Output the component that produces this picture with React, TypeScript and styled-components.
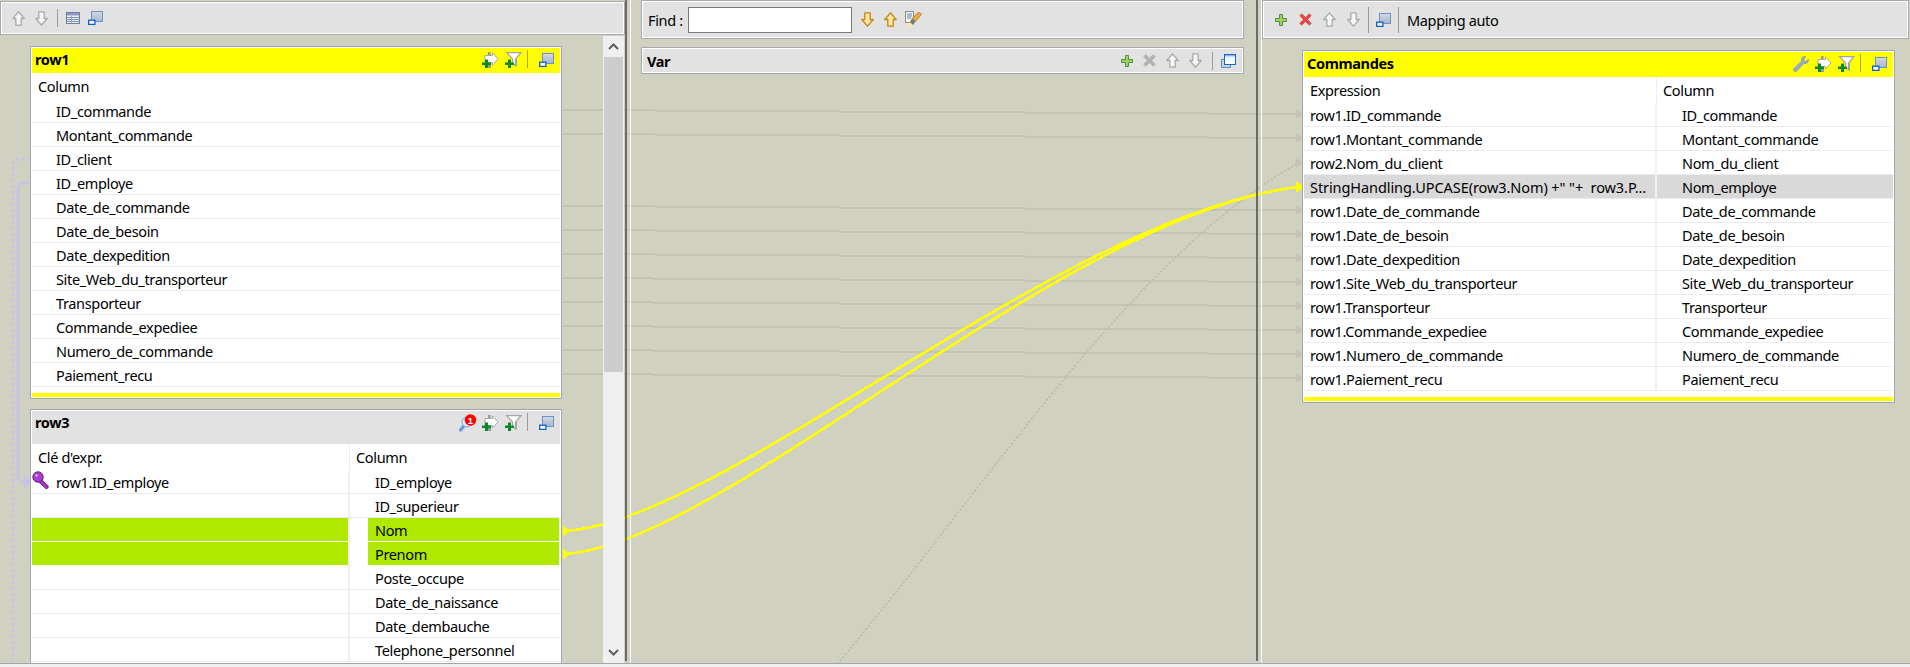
import React from "react";
import styled, { createGlobalStyle } from "styled-components";

const Global = createGlobalStyle`
  html, body { margin: 0; padding: 0; background: #d1d1c2; overflow: hidden; }
  #root { width: 1910px; height: 667px; }
  * { box-sizing: border-box; }
`;

const BG = "#d1d1c2";
const FONT = `"Noto Sans", "Open Sans", sans-serif`;

const Page = styled.div`
  position: relative;
  width: 1910px;
  height: 667px;
  overflow: hidden;
  background: ${BG};
  font-family: ${FONT};
  font-size: 14.5px;
  letter-spacing: -0.35px;
  color: #000;
  display: flex;
  flex-direction: column;
`;
const Main = styled.div`
  position: relative;
  z-index: 1;
  flex: 1;
  min-height: 0;
  display: flex;
`;
const StatusStrip = styled.div`
  position: relative;
  z-index: 1;
  height: 4px;
  background: #f0f0f0;
  border-top: 1px solid #a6a6a6;
`;
const Wires = styled.svg`
  position: absolute;
  left: 0;
  top: 0;
  z-index: 0;
`;
const LeftPane = styled.div`
  width: 625px;
  display: flex;
  flex-direction: column;
  min-height: 0;
`;
const Toolbar = styled.div<{ $h?: number; $mt?: number }>`
  height: ${(p) => p.$h ?? 35}px;
  margin-top: ${(p) => p.$mt ?? 0}px;
  flex: none;
  display: flex;
  align-items: center;
  background: #e2e2e2;
  border: 1px solid #a9a9ad;
  box-shadow: inset 0 0 0 1px #fff;
  padding-left: 6px;
`;
const LeftBody = styled.div`
  flex: 1;
  min-height: 0;
  display: flex;
`;
const CardColumn = styled.div`
  width: 603px;
  padding: 11px 41px 0 30px;
  display: flex;
  flex-direction: column;
  gap: 10px;
  overflow: hidden;
`;
const ScrollBar = styled.div`
  width: 21px;
  margin-top: 1px;
  background: #f0f0f0;
  display: flex;
  flex-direction: column;
  align-items: center;
  justify-content: space-between;
  position: relative;
`;
const ScrollThumb = styled.div`
  position: absolute;
  left: 1px;
  right: 1px;
  top: 21px;
  height: 315px;
  background: #cdcdcd;
`;
const ScrollArrow = styled.div`
  height: 21px;
  width: 100%;
  display: flex;
  align-items: center;
  justify-content: center;
`;
const Sash = styled.div`
  flex: none;
  width: 2px;
  margin-bottom: 2px;
  background: #6b6b6b;
`;
const CenterPane = styled.div`
  width: 626px;
  margin-left: 3px;
  border-left: 1px solid #fff;
  padding: 0 12px 0 10px;
  display: flex;
  flex-direction: column;
`;
const RightPane = styled.div`
  flex: 1;
  margin-left: 3px;
  border-left: 1px solid #fff;
  padding: 0 1px 0 0;
  display: flex;
  flex-direction: column;
`;
const RightCardWrap = styled.div`
  padding: 11px 14px 0 40px;
`;
const Card = styled.div`
  background: #fff;
  border: 1px solid #a3a7aa;
  padding: 1px;
  flex: none;
`;
const ClippedCard = styled(Card)`
  flex: 1;
  min-height: 300px;
`;
const CardHead = styled.div<{ $tone: "yellow" | "grey"; $h: number }>`
  height: ${(p) => p.$h}px;
  background: ${(p) => (p.$tone === "yellow" ? "#ffff00" : "#e2e2e2")};
  display: flex;
  align-items: flex-start;
  padding: 2px 2px 0 3px;
`;
const CardTitle = styled.div`
  font-weight: 700;
  line-height: 18px;
  flex: 1;
`;
const VarCard = styled.div`
  height: 27px;
  margin-top: 8px;
  background: #e2e2e2;
  border: 1px solid #a9a9ad;
  box-shadow: inset 0 0 0 1px #fff;
  display: flex;
  align-items: center;
  padding: 0 3px 0 5px;
`;
const Btn = styled.span<{ $w?: number }>`
  width: ${(p) => p.$w ?? 23}px;
  height: 19px;
  flex: none;
  display: flex;
  align-items: center;
  justify-content: center;
`;
const Sep = styled.span<{ $w?: number; $h?: number; $c?: string }>`
  flex: none;
  width: ${(p) => p.$w ?? 10}px;
  height: ${(p) => p.$h ?? 18}px;
  display: flex;
  justify-content: center;
  &::before {
    content: "";
    width: 1px;
    height: 100%;
    background: ${(p) => p.$c ?? "#9c9c9c"};
  }
`;
const HeadSep = styled(Sep)`
  justify-content: flex-start;
  padding-left: 2px;
`;
const ToolText = styled.span`
  margin-left: 6px;
`;
const FindLabel = styled.span`
  width: 40px;
`;
const FindInput = styled.div`
  width: 164px;
  height: 26px;
  background: #fff;
  border: 1px solid #7a7a7a;
  margin-right: 4px;
`;
const Columns = styled.div<{ $cols: string }>`
  display: grid;
  grid-template-columns: ${(p) => p.$cols};
`;
const HeadCell = styled.div<{ $divider?: boolean }>`
  height: 26px;
  line-height: 26px;
  padding-left: 6px;
  border-right: ${(p) => (p.$divider ? "1px solid #eceef2" : "none")};
`;
const Cell = styled.div<{
  $indent?: number;
  $green?: boolean;
  $selected?: boolean;
  $divider?: boolean;
  $tree?: boolean;
  $loose?: boolean;
}>`
  height: 24px;
  line-height: 25px;
  white-space: pre;
  overflow: hidden;
  position: relative;
  letter-spacing: ${(p) => (p.$loose ? "-0.08px" : "inherit")};
  padding-left: ${(p) => p.$indent ?? 6}px;
  border-bottom: 1px solid ${(p) => (p.$green ? "#fff" : "#e9ebf0")};
  border-right: ${(p) => (p.$divider ? `2px solid #eff0f5` : "none")};
  background: ${(p) =>
    p.$selected
      ? "#d9d9d9"
      : p.$green && !p.$tree
      ? "#afe800"
      : "transparent"};
`;
const GreenFill = styled.span`
  display: block;
  margin: 0 1px 0 -7px;
  padding-left: 7px;
  height: 23px;
  background: #afe800;
`;
const CardFoot = styled.div`
  height: 10px;
  padding-top: 6px;
  &::after {
    content: "";
    display: block;
    height: 4px;
    background: #ffff00;
  }
`;
const KeyIcon = styled.span`
  position: absolute;
  left: 0;
  top: 1px;
  display: block;
  line-height: 0;
`;

/* icons */
const Arrow = ({ dir, tone }: { dir: "up" | "down"; tone: "grey" | "gold" }) => {
  const stroke = tone === "grey" ? "#a9a9a9" : "#c4860e";
  const fill = tone === "grey" ? "#f6f6f6" : "#ffe8a6";
  return (
    <svg width="13" height="15" viewBox="0 0 13 15">
      <g transform={dir === "down" ? "rotate(180 6.5 7.5)" : undefined}>
        <path d="M6.5 .8 L12.2 7.5 H9.2 V14.2 H3.8 V7.5 H.8 Z" fill={fill} stroke={stroke} strokeWidth="1.3" strokeLinejoin="round" />
      </g>
    </svg>
  );
};
const WindowIcon = ({ bright }: { bright?: boolean }) => (
  <svg width="15" height="14" viewBox="0 0 15 14">
    <defs>
      <linearGradient id={bright ? "wb" : "wd"} x1="0" y1="0" x2="0" y2="1">
        <stop offset="0" stopColor={bright ? "#4e8ce8" : "#d6deea"} />
        <stop offset=".25" stopColor={bright ? "#e8f2ff" : "#c6d0de"} />
        <stop offset="1" stopColor={bright ? "#ffffff" : "#a8b8cc"} />
      </linearGradient>
    </defs>
    {bright && <rect x=".5" y="5.5" width="9" height="8" fill="#c6d4e6" stroke="#6a8ab8" />}
    <rect x="3.5" y=".5" width="11" height="10" fill={`url(#${bright ? "wb" : "wd"})`} stroke={bright ? "#1467d8" : "#6f93c4"} />
    {!bright && <rect x=".7" y="9.2" width="6.2" height="4.2" fill="#fff" stroke="#0b5ed7" strokeWidth="1.3" />}
  </svg>
);
const TableIcon = () => (
  <svg width="14" height="12" viewBox="0 0 14 12">
    <rect x=".5" y=".5" width="13" height="11" fill="#eef2f8" stroke="#6d80a6" />
    <rect x="1" y="1" width="12" height="2.5" fill="#8b9cbf" />
    <path d="M1 5.5H13M1 7.5H13M1 9.5H13" stroke="#7f90b2" />
    <path d="M5.5 3.5V11" stroke="#9aa8c4" />
  </svg>
);
const GreenPlusOverlay = () => <path d="M3 7.5H6V10.5H9V13H6V16H3V13H0V10.5H3Z" fill="#0a8a2c" />;
const AddArrowIcon = () => (
  <svg width="17" height="16" viewBox="0 0 17 16">
    <rect x="6" y="0" width="2.5" height="4" fill="#9a9a9a" />
    <path d="M3 3.5H10.5V.9L16 7 10.5 13.1V10.5H3Z" fill="#fff" stroke="#a8a8a8" />
    <rect x="6" y="10" width="3" height="6" fill="#9a9a9a" />
    <GreenPlusOverlay />
  </svg>
);
const FilterAddIcon = () => (
  <svg width="17" height="16" viewBox="0 0 17 16">
    <path d="M1.7 .7H15.8L10.6 7V13.5L7.6 12V7Z" fill="#fff" stroke="#a4a4a4" strokeWidth="1.2" />
    <rect x="9.8" y="7" width="2.2" height="7.5" fill="#a4a4a4" />
    <GreenPlusOverlay />
  </svg>
);
const PlusIcon = () => (
  <svg width="12" height="12" viewBox="0 0 12 12">
    <path d="M4.5.5H7.5V4.5H11.5V7.5H7.5V11.5H4.5V7.5H.5V4.5H4.5Z" fill="#a3cf5d" stroke="#4d8f4a" />
  </svg>
);
const CrossIcon = ({ color, edge }: { color: string; edge: string }) => (
  <svg width="13" height="13" viewBox="0 0 13 13">
    <path d="M2.7.8 6.5 4.4 10.3.8 12.2 2.7 8.5 6.5 12.2 10.3 10.3 12.2 6.5 8.6 2.7 12.2.8 10.3 4.5 6.5.8 2.7Z" fill={color} stroke={edge} strokeWidth=".7" />
  </svg>
);
const WrenchIcon = () => (
  <svg width="16" height="16" viewBox="0 0 16 16">
    <path d="M15.5 3.5 12.8 5.6 10.8 4.8 10.8 2.4 13 .6C10.6-.2 8.4 1.4 8.4 3.8L8.6 5.2 1.3 12.2C.4 13.2.6 14.4 1.4 15 2.2 15.8 3.3 15.6 4 14.8L10.6 7.6C13 8.2 15.8 6.6 15.5 3.5Z" fill="#8eacd6" stroke="#7d8fa8" strokeWidth=".7" />
  </svg>
);
const LookupIcon = () => (
  <svg width="18" height="18" viewBox="0 0 18 18">
    <path d="M1.5 16 6.5 10" stroke="#6f9bd8" strokeWidth="3.4" strokeLinecap="round" />
    <circle cx="8" cy="8" r="5" fill="#dbe6f6" stroke="#8aa8d0" />
    <circle cx="11.5" cy="6" r="5.8" fill="#f00" />
    <text x="11.5" y="9.5" textAnchor="middle" fontSize="9.5" fontWeight="700" letterSpacing="0" fill="#fff" fontFamily="Liberation Sans, sans-serif">1</text>
  </svg>
);
const SearchEditIcon = () => (
  <svg width="17" height="17" viewBox="0 0 17 17">
    <rect x=".5" y=".5" width="8" height="11" fill="#f4f4ec" stroke="#8a8f80" />
    <path d="M2 3H7M2 5H7M2 7H6" stroke="#5f86c0" />
    <path d="M1 16.5 5 11 8 14Z" fill="#ffe9a0" />
    <path d="M7 7.5 12 2.5C13.5 1 16.5 1.5 16 4L10.5 10.5Z" fill="#e8a94a" stroke="#a97a2a" strokeWidth=".8" />
    <path d="M5 11 7 7.5 10.5 10.5 8 14Z" fill="#777" />
  </svg>
);
const PurpleKey = () => (
  <svg width="17" height="19" viewBox="0 0 17 19">
    <path d="M6.5 8 14.4 15.8" stroke="#6a1f86" strokeWidth="4.4" strokeLinecap="round" />
    <path d="M6.5 8 14.4 15.8" stroke="#a93ecb" strokeWidth="2.4" strokeLinecap="round" />
    <circle cx="6" cy="6" r="5.2" fill="#a93ecb" stroke="#6a1f86" />
    <circle cx="4.5" cy="4.5" r="1.2" fill="#e6b5f5" />
  </svg>
);
const Chevron = ({ up }: { up?: boolean }) => (
  <svg width="11" height="7" viewBox="0 0 11 7">
    <path d={up ? "M1 6 5.5 1.5 10 6" : "M1 1 5.5 5.5 10 1"} fill="none" stroke="#5f5f5f" strokeWidth="2" />
  </svg>
);

const row1Cols = [
  "ID_commande", "Montant_commande", "ID_client", "ID_employe", "Date_de_commande", "Date_de_besoin",
  "Date_dexpedition", "Site_Web_du_transporteur", "Transporteur", "Commande_expediee", "Numero_de_commande", "Paiement_recu",
];
const row3Cols = [
  "ID_employe", "ID_superieur", "Nom", "Prenom", "Poste_occupe", "Date_de_naissance", "Date_dembauche", "Telephone_personnel",
];
const outRows: [string, string][] = [
  ["row1.ID_commande", "ID_commande"],
  ["row1.Montant_commande", "Montant_commande"],
  ["row2.Nom_du_client", "Nom_du_client"],
  ['StringHandling.UPCASE(row3.Nom) +" "+  row3.P...', "Nom_employe"],
  ["row1.Date_de_commande", "Date_de_commande"],
  ["row1.Date_de_besoin", "Date_de_besoin"],
  ["row1.Date_dexpedition", "Date_dexpedition"],
  ["row1.Site_Web_du_transporteur", "Site_Web_du_transporteur"],
  ["row1.Transporteur", "Transporteur"],
  ["row1.Commande_expediee", "Commande_expediee"],
  ["row1.Numero_de_commande", "Numero_de_commande"],
  ["row1.Paiement_recu", "Paiement_recu"],
];

const mapped = [0, 1, 4, 5, 6, 7, 8, 9, 10, 11];
const WIRE = "#c3c4b3";
const LILAC = "#c9c3e6";

const Connectors = () => (
  <Wires width="1910" height="667" viewBox="0 0 1910 667">
    {mapped.map((i) => (
      <g key={i}>
        <path d={`M562 ${110 + 24 * i}L1298 ${114 + 24 * i}`} stroke={WIRE} strokeWidth="2" shapeRendering="crispEdges" />
        <path d={`M1296 ${109 + 24 * i}L1303 ${114 + 24 * i}L1296 ${119 + 24 * i}Z`} fill={WIRE} />
      </g>
    ))}
    <path d="M835 667C1000 470 1130 260 1298 163" fill="none" stroke="#b9bcab" strokeWidth="1.6" strokeDasharray="2 2" />
    <path d="M1296 158L1303 163L1296 168Z" fill={WIRE} />
    <path d="M563 531C720 525 1060 215 1298 187" fill="none" stroke="#ffff00" strokeWidth="2.6" shapeRendering="crispEdges" />
    <path d="M563 554C720 548 1060 215 1298 187" fill="none" stroke="#ffff00" strokeWidth="2.6" shapeRendering="crispEdges" />
    <path d="M1296 181L1304 187L1296 193Z" fill="#ffff00" />
    <path d="M563 525L569 531L563 537Z" fill="#ffff00" />
    <path d="M563 548L569 554L563 560Z" fill="#ffff00" />
    <path d="M31 183H24Q18 183 18 189V476Q18 482 24 482H31" fill="none" stroke={LILAC} strokeWidth="3" />
    <path d="M24 474L32 482L24 490Z" fill={LILAC} />
    <path d="M31 159H18Q13 159 13 164V667" fill="none" stroke={LILAC} strokeWidth="3" strokeDasharray="3 3" />
  </Wires>
);

export default function App() {
  return (
    <Page>
      <Global />
      <Connectors />
      <Main>
        <LeftPane>
          <Toolbar $h={34} $mt={1}>
            <Btn><Arrow dir="up" tone="grey" /></Btn>
            <Btn><Arrow dir="down" tone="grey" /></Btn>
            <Sep $w={8} />
            <Btn><TableIcon /></Btn>
            <Btn><WindowIcon /></Btn>
          </Toolbar>
          <LeftBody>
            <CardColumn>
              <Card>
                <CardHead $tone="yellow" $h={25}>
                  <CardTitle>row1</CardTitle>
                  <Btn><AddArrowIcon /></Btn>
                  <Btn><FilterAddIcon /></Btn>
                  <HeadSep $c="#b0a800" />
                  <Btn><WindowIcon /></Btn>
                </CardHead>
                <Columns $cols="1fr">
                  <HeadCell>Column</HeadCell>
                  {row1Cols.map((c) => (
                    <Cell key={c} $indent={24}>{c}</Cell>
                  ))}
                </Columns>
                <CardFoot />
              </Card>
              <ClippedCard>
                <CardHead $tone="grey" $h={33}>
                  <CardTitle>row3</CardTitle>
                  <Btn><LookupIcon /></Btn>
                  <Btn><AddArrowIcon /></Btn>
                  <Btn><FilterAddIcon /></Btn>
                  <HeadSep />
                  <Btn><WindowIcon /></Btn>
                </CardHead>
                <Columns $cols="318px 1fr">
                  <HeadCell $divider>Clé d'expr.</HeadCell>
                  <HeadCell>Column</HeadCell>
                  {row3Cols.map((c, i) => {
                    const green = c === "Nom" || c === "Prenom";
                    return (
                      <React.Fragment key={c}>
                        <Cell $divider $indent={24} $green={green}>
                          {i === 0 && <KeyIcon><PurpleKey /></KeyIcon>}
                          {i === 0 ? "row1.ID_employe" : ""}
                        </Cell>
                        <Cell $indent={25} $green={green} $tree>
                          {green ? <GreenFill>{c}</GreenFill> : c}
                        </Cell>
                      </React.Fragment>
                    );
                  })}
                </Columns>
              </ClippedCard>
            </CardColumn>
            <ScrollBar>
              <ScrollThumb />
              <ScrollArrow><Chevron up /></ScrollArrow>
              <ScrollArrow><Chevron /></ScrollArrow>
            </ScrollBar>
          </LeftBody>
        </LeftPane>
        <Sash />
        <CenterPane>
          <Toolbar $h={39}>
            <FindLabel>Find :</FindLabel>
            <FindInput />
            <Btn><Arrow dir="down" tone="gold" /></Btn>
            <Btn><Arrow dir="up" tone="gold" /></Btn>
            <Btn><SearchEditIcon /></Btn>
          </Toolbar>
          <VarCard>
            <CardTitle>Var</CardTitle>
            <Btn><PlusIcon /></Btn>
            <Btn><CrossIcon color="#b4b4b4" edge="#a4a4a4" /></Btn>
            <Btn><Arrow dir="up" tone="grey" /></Btn>
            <Btn><Arrow dir="down" tone="grey" /></Btn>
            <Sep $w={10} />
            <Btn><WindowIcon bright /></Btn>
          </VarCard>
        </CenterPane>
        <Sash />
        <RightPane>
          <Toolbar $h={39}>
            <Btn $w={24}><PlusIcon /></Btn>
            <Btn $w={24}><CrossIcon color="#ee4444" edge="#c84a4a" /></Btn>
            <Btn $w={24}><Arrow dir="up" tone="grey" /></Btn>
            <Btn $w={24}><Arrow dir="down" tone="grey" /></Btn>
            <Sep $w={6} $h={26} />
            <Btn $w={24}><WindowIcon /></Btn>
            <Sep $w={6} $h={26} />
            <ToolText>Mapping auto</ToolText>
          </Toolbar>
          <RightCardWrap>
            <Card>
              <CardHead $tone="yellow" $h={25}>
                <CardTitle>Commandes</CardTitle>
                <Btn><WrenchIcon /></Btn>
                <Btn><AddArrowIcon /></Btn>
                <Btn><FilterAddIcon /></Btn>
                <HeadSep $c="#b0a800" />
                <Btn><WindowIcon /></Btn>
              </CardHead>
              <Columns $cols="353px 1fr">
                <HeadCell $divider>Expression</HeadCell>
                <HeadCell>Column</HeadCell>
                {outRows.map(([e, c], i) => (
                  <React.Fragment key={c}>
                    <Cell $divider $selected={i === 3} $loose={i === 3}>{e}</Cell>
                    <Cell $indent={25} $selected={i === 3}>{c}</Cell>
                  </React.Fragment>
                ))}
              </Columns>
              <CardFoot />
            </Card>
          </RightCardWrap>
        </RightPane>
      </Main>
      <StatusStrip />
    </Page>
  );
}
